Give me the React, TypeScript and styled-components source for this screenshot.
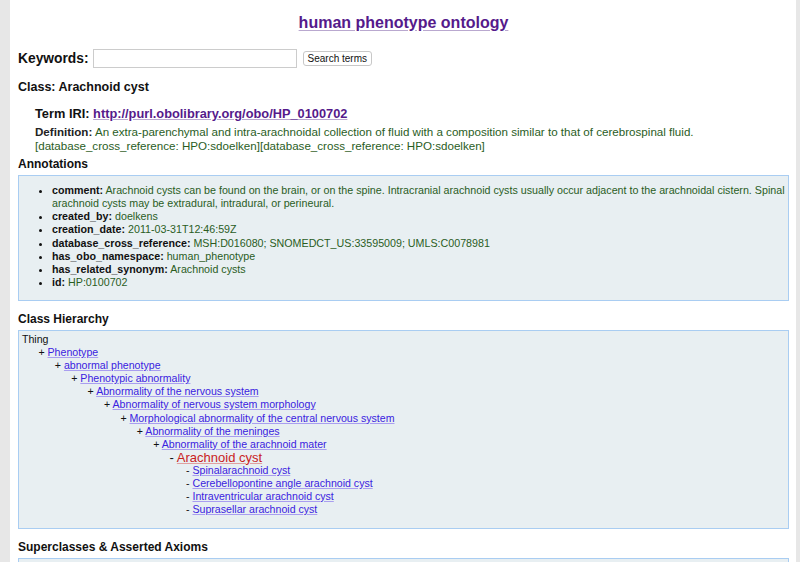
import React from "react";
import styled, { createGlobalStyle } from "styled-components";

const Global = createGlobalStyle`
  html, body { margin: 0; padding: 0; }
  body {
    background: #e7e7e7;
    font-family: "Liberation Sans", Arial, sans-serif;
    color: #111;
    overflow: hidden;
  }
`;

const Page = styled.div`
  margin: 0 4px 0 10px;
  background: #fff;
  min-height: 562px;
  padding: 12px 7px 0 8px;
  box-sizing: border-box;
`;

const Title = styled.h1`
  margin: 0;
  text-align: center;
  font-size: 16px;
  line-height: 22px;
  font-weight: bold;
  a {
    color: #551a8b;
    text-decoration: underline;
    text-decoration-color: #b9a8cf;
    text-underline-offset: 2px;
  }
`;

const SearchRow = styled.form`
  display: flex;
  align-items: center;
  margin-top: 14px;
  height: 20px;
`;

const Label = styled.span`
  font-weight: bold;
  font-size: 13.8px;
  margin-right: 4px;
`;

const Input = styled.input`
  width: 204px;
  height: 19px;
  box-sizing: border-box;
  border: 1px solid #ccc;
  padding: 0 3px;
  font-size: 12px;
`;

const Button = styled.button`
  margin-left: 6px;
  height: 15px;
  box-sizing: border-box;
  padding: 0 4px;
  border: 1px solid #c8c8c8;
  border-radius: 3px;
  background: #fff;
  font-family: "Liberation Sans", Arial, sans-serif;
  font-size: 10px;
  line-height: 13px;
  color: #111;
`;

const ClassHeading = styled.h2`
  margin: 11px 0 0 0;
  font-size: 12.5px;
  line-height: 16px;
  font-weight: bold;
`;

const TermBlock = styled.div`
  padding-left: 17px;
`;

const IriLine = styled.div`
  margin-top: 10px;
  font-size: 12.8px;
  line-height: 18px;
  font-weight: bold;
  a {
    color: #551a8b;
    text-decoration-color: #b9a8cf;
  }
`;

const Definition = styled.div`
  margin-top: 2px;
  font-size: 11.6px;
  line-height: 14px;
  color: #2a5d1e;
  b { color: #222; }
`;

const SectionTitle = styled.h3<{ $top: number }>`
  margin: ${(p) => p.$top}px 0 0 0;
  font-size: 12px;
  line-height: 14px;
  font-weight: bold;
`;

const Panel = styled.div<{ $h: number }>`
  margin-top: 4px;
  background: #e8eff2;
  border: 1px solid #a9cdf2;
  height: ${(p) => p.$h}px;
  box-sizing: border-box;
`;

const AnnList = styled.ul`
  margin: 0;
  padding: 8px 1px 0 33px;
  font-size: 10.7px;
  line-height: 13.15px;
  color: #2a5d1e;
  li::marker { color: #111; }
  b { color: #111; }
`;

const Tree = styled.div`
  padding: 2px 0 0 3px;
`;

const Node = styled.div<{ $level: number; $big?: boolean }>`
  padding-left: ${(p) => p.$level * 16.4}px;
  font-size: ${(p) => (p.$big ? "13px" : "10.6px")};
  line-height: 13.1px;
  white-space: nowrap;
  a {
    color: ${(p) => (p.$big ? "#c8221d" : "#3a22e0")};
    text-decoration-color: ${(p) => (p.$big ? "#e0a0a0" : "#a99ef0")};
  }
`;

const annotations: [string, string][] = [
  [
    "comment",
    "Arachnoid cysts can be found on the brain, or on the spine. Intracranial arachnoid cysts usually occur adjacent to the arachnoidal cistern. Spinal arachnoid cysts may be extradural, intradural, or perineural.",
  ],
  ["created_by", "doelkens"],
  ["creation_date", "2011-03-31T12:46:59Z"],
  ["database_cross_reference", "MSH:D016080; SNOMEDCT_US:33595009; UMLS:C0078981"],
  ["has_obo_namespace", "human_phenotype"],
  ["has_related_synonym", "Arachnoid cysts"],
  ["id", "HP:0100702"],
];

const tree: { level: number; mark: string; label: string; big?: boolean; plain?: boolean }[] = [
  { level: 0, mark: "", label: "Thing", plain: true },
  { level: 1, mark: "+", label: "Phenotype" },
  { level: 2, mark: "+", label: "abnormal phenotype" },
  { level: 3, mark: "+", label: "Phenotypic abnormality" },
  { level: 4, mark: "+", label: "Abnormality of the nervous system" },
  { level: 5, mark: "+", label: "Abnormality of nervous system morphology" },
  { level: 6, mark: "+", label: "Morphological abnormality of the central nervous system" },
  { level: 7, mark: "+", label: "Abnormality of the meninges" },
  { level: 8, mark: "+", label: "Abnormality of the arachnoid mater" },
  { level: 9, mark: "-", label: "Arachnoid cyst", big: true },
  { level: 10, mark: "-", label: "Spinalarachnoid cyst" },
  { level: 10, mark: "-", label: "Cerebellopontine angle arachnoid cyst" },
  { level: 10, mark: "-", label: "Intraventricular arachnoid cyst" },
  { level: 10, mark: "-", label: "Suprasellar arachnoid cyst" },
];

export default function App() {
  return (
    <>
      <Global />
      <Page>
        <Title>
          <a href="#">human phenotype ontology</a>
        </Title>
        <SearchRow onSubmit={(e) => e.preventDefault()}>
          <Label>Keywords:</Label>
          <Input type="text" />
          <Button type="submit">Search terms</Button>
        </SearchRow>
        <ClassHeading>Class: Arachnoid cyst</ClassHeading>
        <TermBlock>
          <IriLine>
            Term IRI: <a href="#">http://purl.obolibrary.org/obo/HP_0100702</a>
          </IriLine>
          <Definition>
            <b>Definition:</b> An extra-parenchymal and intra-arachnoidal collection of fluid with a
            composition similar to that of cerebrospinal fluid.
            <br />
            [database_cross_reference: HPO:sdoelken][database_cross_reference: HPO:sdoelken]
          </Definition>
        </TermBlock>
        <SectionTitle $top={4}>Annotations</SectionTitle>
        <Panel $h={126}>
          <AnnList>
            {annotations.map(([k, v]) => (
              <li key={k}>
                <b>{k}:</b> {v}
              </li>
            ))}
          </AnnList>
        </Panel>
        <SectionTitle $top={11}>Class Hierarchy</SectionTitle>
        <Panel $h={199}>
          <Tree>
            {tree.map((n, i) => (
              <Node key={i} $level={n.level} $big={n.big}>
                {n.plain ? (
                  n.label
                ) : (
                  <>
                    <span>{n.mark} </span>
                    <a href="#">{n.label}</a>
                  </>
                )}
              </Node>
            ))}
          </Tree>
        </Panel>
        <SectionTitle $top={11}>Superclasses &amp; Asserted Axioms</SectionTitle>
        <Panel $h={40} />
      </Page>
    </>
  );
}
